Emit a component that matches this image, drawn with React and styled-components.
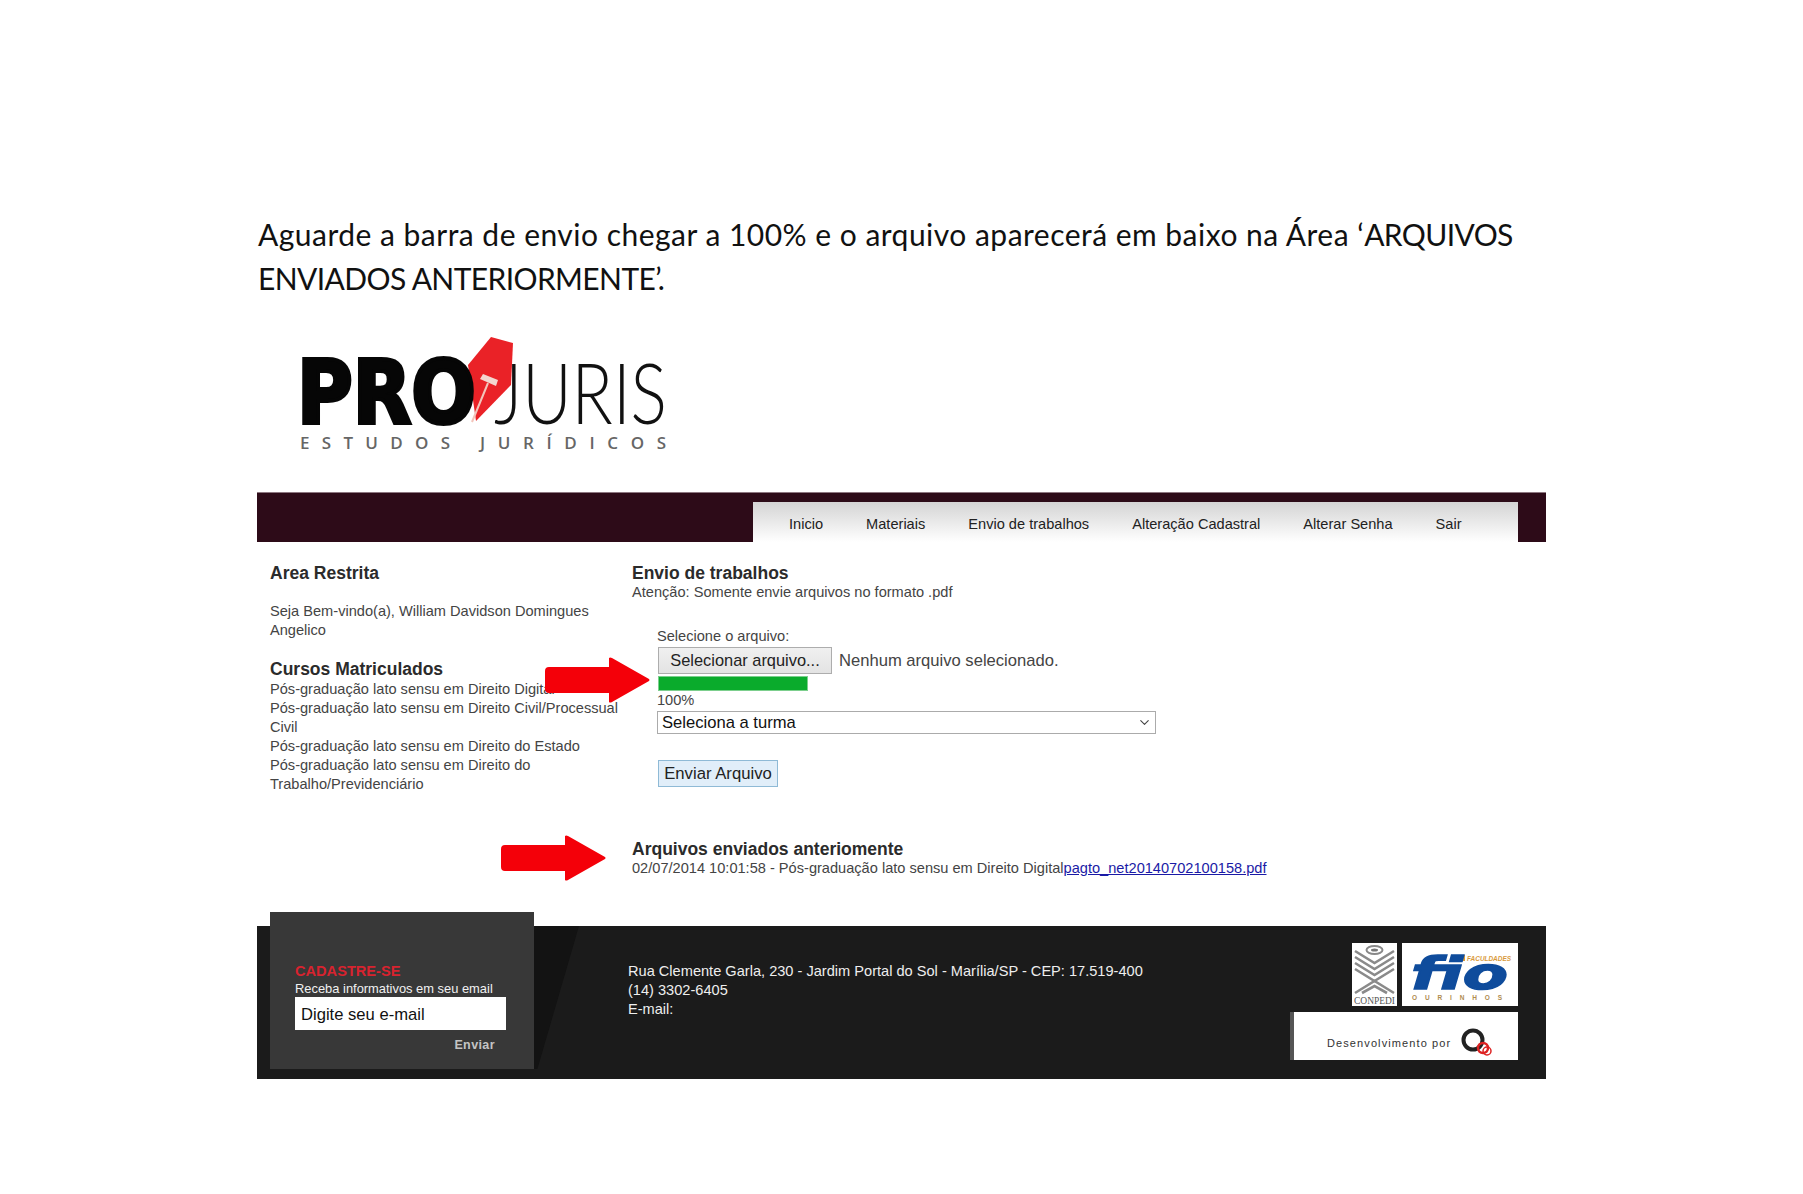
import React from "react";
import styled, { createGlobalStyle } from "styled-components";
import { ChevronDown } from "lucide-react";

const GlobalStyle = createGlobalStyle`
  html, body {
    margin: 0;
    padding: 0;
    background: #fff;
  }
  body {
    font-family: "Liberation Sans", Arial, sans-serif;
    color: #333;
  }
`;

const Page = styled.div`
  width: 1803px;
  height: 1194px;
  padding: 212px 0 0 257px;
  box-sizing: border-box;
  overflow: hidden;
`;

const Intro = styled.p`
  margin: 0 0 0 1px;
  font-family: "Lato", "Open Sans", sans-serif;
  font-size: 30px;
  line-height: 44px;
  letter-spacing: 0.48px;
  color: #111;
  white-space: nowrap;
`;

const Caps = styled.span`
  letter-spacing: -0.6px;
`;

const LogoWrap = styled.div`
  margin-top: 29px;
  height: 163px;
  padding-left: 33px;
  svg {
    display: block;
  }
`;

const Sheet = styled.div`
  width: 1289px;
`;

const Band = styled.div`
  height: 50px;
  background: #2d0b18;
  border-top: 1px solid #8d7780;
  box-sizing: border-box;
  display: flex;
  justify-content: flex-end;
  align-items: flex-end;
  padding-right: 28px;
`;

const Nav = styled.nav`
  width: 765px;
  height: 40px;
  box-sizing: border-box;
  padding: 13px 0 0 36px;
  background: linear-gradient(#d4d4d4, #ffffff);
  display: flex;
  gap: 43px;
  font-size: 14.6px;
  line-height: 18px;
  color: #222;
`;

const Content = styled.div`
  position: relative;
  display: flex;
  padding-top: 21px;
`;

const Side = styled.aside`
  width: 362px;
  margin-left: 13px;
  flex: none;
`;

const Main = styled.main`
  flex: 1;
`;

const Title = styled.h2`
  margin: ${(p) => p.$top || 0}px 0 0;
  font-size: 17.5px;
  line-height: 20px;
  font-weight: 700;
  color: #2b2b2b;
`;

const Text = styled.p`
  margin: ${(p) => p.$top || 0}px 0 0;
  font-size: 14.6px;
  line-height: ${(p) => p.$line || 19}px;
  color: #444;
`;

const CourseList = styled.div`
  margin-top: 1px;
  font-size: 14.6px;
  line-height: 19px;
  color: #444;
  div {
    width: 362px;
  }
`;

const UploadForm = styled.form`
  margin: 26px 0 0 25px;
  width: 499px;
`;

const FileRow = styled.div`
  margin-top: 2px;
  display: flex;
  align-items: center;
  gap: 7px;
  font-size: 16.6px;
  color: #444;
`;

const FileButton = styled.button`
  margin-left: 1px;
  width: 174px;
  height: 27px;
  padding: 0;
  border: 1px solid #adadad;
  background: linear-gradient(#f0f0f0, #e3e3e3);
  font-family: inherit;
  font-size: 16.4px;
  color: #222;
`;

const Progress = styled.div`
  margin: 2px 0 0 1px;
  width: 150px;
  height: 15px;
  box-sizing: border-box;
  border: 1px solid #7ccf8d;
  background: #0aab2c;
`;

const Percent = styled.div`
  font-size: 14.6px;
  line-height: 18px;
  color: #444;
`;

const SelectWrap = styled.div`
  position: relative;
  margin-top: 2px;
  svg {
    position: absolute;
    right: 4px;
    top: 4px;
    color: #444;
    pointer-events: none;
  }
`;

const TurmaSelect = styled.select`
  display: block;
  width: 499px;
  height: 23px;
  padding: 0 0 0 4px;
  border: 1px solid #ababab;
  border-radius: 0;
  appearance: none;
  background: #fff;
  font-family: inherit;
  font-size: 16.6px;
  color: #111;
`;

const SendButton = styled.button`
  display: block;
  margin: 26px 0 0 1px;
  width: 120px;
  height: 27px;
  padding: 0;
  border: 1px solid #8fbad6;
  background: #e1eef9;
  font-family: inherit;
  font-size: 16.7px;
  color: #222;
`;

const FileLink = styled.a`
  color: #1a1aa6;
  text-decoration: underline;
`;

const ArrowMark = styled.svg`
  position: absolute;
  left: ${(p) => p.$left}px;
  top: ${(p) => p.$top}px;
`;

const Footer = styled.footer`
  position: relative;
  margin-top: 49px;
  height: 153px;
  display: flex;
  align-items: flex-start;
  background: #1b1b1b;
  &::before {
    content: "";
    position: absolute;
    left: 270px;
    top: 0;
    width: 52px;
    height: 143px;
    background: #131313;
    clip-path: polygon(0 0, 100% 0, 20% 100%, 0 100%);
  }
`;

const Signup = styled.div`
  position: relative;
  margin: -14px 0 0 13px;
  width: 264px;
  height: 157px;
  box-sizing: border-box;
  padding: 50px 0 0 25px;
  background: #383838;
  flex: none;
`;

const SignupTitle = styled.div`
  font-size: 14.6px;
  line-height: 18px;
  font-weight: 700;
  color: #d8232f;
`;

const SignupNote = styled.div`
  font-size: 12.9px;
  line-height: 17px;
  color: #f0f0f0;
`;

const EmailInput = styled.input`
  display: block;
  width: 211px;
  height: 33px;
  box-sizing: border-box;
  padding: 2px 6px 0;
  border: 0;
  border-radius: 0;
  background: #fff;
  font-family: inherit;
  font-size: 16.6px;
  &::placeholder {
    color: #111;
    opacity: 1;
  }
`;

const SignupSend = styled.div`
  width: 200px;
  margin-top: 6px;
  text-align: right;
  font-size: 12.5px;
  line-height: 18px;
  font-weight: 700;
  letter-spacing: 0.4px;
  color: #c4c4c4;
`;

const Address = styled.div`
  position: relative;
  margin-left: 94px;
  padding-top: 36px;
  font-size: 14.6px;
  line-height: 19px;
  color: #eee;
`;

const Partners = styled.div`
  margin-left: auto;
  padding: 17px 28px 0 0;
  width: 228px;
  display: flex;
  flex-direction: column;
  align-items: flex-end;
  gap: 6px;
  svg {
    display: block;
  }
`;

const PartnerRow = styled.div`
  display: flex;
  gap: 5px;
`;

const DevBox = styled.div`
  width: 228px;
  height: 48px;
  box-sizing: border-box;
  padding: 14px 0 0 33px;
  display: flex;
  align-items: center;
  gap: 10px;
  background: #fff;
  border-left: 4px solid #555;
  font-size: 11px;
  letter-spacing: 1.1px;
  color: #333;
  white-space: nowrap;
`;

const Logo = () => (
  <svg width="390" height="130" viewBox="0 0 390 130">
    <polygon points="201,8 223,14 221,56 186,92 178,36" fill="#ea2227" />
    <text x="7" y="94" fontFamily="DejaVu Sans" fontWeight="700" fontSize="88" textLength="179" lengthAdjust="spacingAndGlyphs" stroke="#060606" strokeWidth="4" fill="#060606">PRO</text>
    <polygon points="190,50 193,45 208,51 206,57" fill="#f3d6cf" />
    <polyline points="198,54 182,93" stroke="#f3c4ba" strokeWidth="2" fill="none" />
    <text x="204" y="95" fontFamily="Lato" fontWeight="300" fontSize="85" textLength="173" lengthAdjust="spacingAndGlyphs" fill="#111">JURIS</text>
    <text x="10" y="120" fontFamily="Open Sans" fontWeight="600" fontSize="17" textLength="150" fill="#666">ESTUDOS</text>
    <text x="190" y="120" fontFamily="Open Sans" fontWeight="600" fontSize="17" textLength="186" fill="#666">JURÍDICOS</text>
  </svg>
);

const Arrow = ({ left, top }) => (
  <ArrowMark $left={left} $top={top} width="105" height="46" viewBox="0 0 105 46">
    <path d="M4 10 H64 V1 Q65 0 67 1 L104 22 Q105 23 104 24 L67 45 Q65 46 64 45 V36 H4 Q0 36 0 32 V14 Q0 10 4 10 Z" fill="#f40009" />
  </ArrowMark>
);

const Conpedi = () => (
  <svg width="45" height="63" viewBox="0 0 45 63">
    <rect width="45" height="63" fill="#fff" />
    <ellipse cx="22.5" cy="7" rx="8" ry="4" fill="none" stroke="#888" strokeWidth="2" />
    <ellipse cx="22.5" cy="7" rx="3.5" ry="1.5" fill="#777" />
    <g fill="none" stroke="#8a8a8a" strokeWidth="2.6">
      <path d="M3 8 L22.5 20 L42 8" />
      <path d="M3 14 L22.5 26 L42 14" />
      <path d="M3 20 L22.5 32 L42 20" />
      <path d="M3 26 L22.5 38 L42 26" />
      <path d="M3 50 L22.5 38 L42 50" />
      <path d="M10 50 L22.5 43 L35 50" />
    </g>
    <text x="22.5" y="61" textAnchor="middle" fontFamily="Liberation Serif" fontSize="9.5" textLength="41" lengthAdjust="spacingAndGlyphs" fill="#555">CONPEDI</text>
  </svg>
);

const Fio = () => (
  <svg width="116" height="63" viewBox="0 0 116 63">
    <rect width="116" height="63" fill="#fff" />
    <rect x="51" y="12" width="12" height="6" fill="#d99a3c" />
    <text x="9" y="46" fontFamily="DejaVu Sans" fontWeight="700" fontStyle="italic" fontSize="44" textLength="97" lengthAdjust="spacingAndGlyphs" stroke="#0f4c9c" strokeWidth="1.5" fill="#0f4c9c">fio</text>
    <text x="65" y="18" fontFamily="Liberation Sans" fontWeight="700" fontStyle="italic" fontSize="8" textLength="44" lengthAdjust="spacingAndGlyphs" fill="#d99a3c">FACULDADES</text>
    <text x="10" y="57" fontFamily="Liberation Sans" fontWeight="700" fontSize="6.5" textLength="90" fill="#b08c50">OURINHOS</text>
  </svg>
);

const Rings = () => (
  <svg width="32" height="30" viewBox="0 0 32 30">
    <circle cx="12" cy="12" r="9.5" fill="none" stroke="#222" strokeWidth="4" />
    <circle cx="22" cy="20" r="5" fill="none" stroke="#d22" strokeWidth="2.5" />
    <circle cx="26" cy="23" r="4" fill="none" stroke="#d22" strokeWidth="1.5" />
  </svg>
);

const App = () => {
  return (
    <>
      <GlobalStyle />
      <Page>
        <Intro>
          Aguarde a barra de envio chegar a 100% e o arquivo aparecerá em baixo na Área ‘<Caps>ARQUIVOS</Caps>
          <br />
          <Caps>ENVIADOS ANTERIORMENTE’.</Caps>
        </Intro>
        <LogoWrap>
          <Logo />
        </LogoWrap>
        <Sheet>
          <Band>
            <Nav>
              <span>Inicio</span>
              <span>Materiais</span>
              <span>Envio de trabalhos</span>
              <span>Alteração Cadastral</span>
              <span>Alterar Senha</span>
              <span>Sair</span>
            </Nav>
          </Band>
          <Content>
            <Side>
              <Title>Area Restrita</Title>
              <Text $top={19}>
                Seja Bem-vindo(a), William Davidson Domingues
                <br />
                Angelico
              </Text>
              <Title $top={19}>Cursos Matriculados</Title>
              <CourseList>
                <div>Pós-graduação lato sensu em Direito Digital</div>
                <div>Pós-graduação lato sensu em Direito Civil/Processual Civil</div>
                <div>Pós-graduação lato sensu em Direito do Estado</div>
                <div>Pós-graduação lato sensu em Direito do Trabalho/Previdenciário</div>
              </CourseList>
            </Side>
            <Main>
              <Title>Envio de trabalhos</Title>
              <Text $line={18}>Atenção: Somente envie arquivos no formato .pdf</Text>
              <UploadForm>
                <Text $line={18}>Selecione o arquivo:</Text>
                <FileRow>
                  <FileButton type="button">Selecionar arquivo...</FileButton>
                  <span>Nenhum arquivo selecionado.</span>
                </FileRow>
                <Progress />
                <Percent>100%</Percent>
                <SelectWrap>
                  <TurmaSelect defaultValue="">
                    <option value="">Seleciona a turma</option>
                  </TurmaSelect>
                  <ChevronDown size={15} strokeWidth={1.75} />
                </SelectWrap>
                <SendButton type="button">Enviar Arquivo</SendButton>
              </UploadForm>
              <Title $top={52}>Arquivos enviados anteriomente</Title>
              <Text $line={18}>
                02/07/2014 10:01:58 - Pós-graduação lato sensu em Direito Digital
                <FileLink href="#">pagto_net20140702100158.pdf</FileLink>
              </Text>
            </Main>
            <Arrow left={288} top={115} />
            <Arrow left={244} top={293} />
          </Content>
          <Footer>
            <Signup>
              <SignupTitle>CADASTRE-SE</SignupTitle>
              <SignupNote>Receba informativos em seu email</SignupNote>
              <EmailInput placeholder="Digite seu e-mail" />
              <SignupSend>Enviar</SignupSend>
            </Signup>
            <Address>
              Rua Clemente Garla, 230 - Jardim Portal do Sol - Marília/SP - CEP: 17.519-400
              <br />
              (14) 3302-6405
              <br />
              E-mail:
            </Address>
            <Partners>
              <PartnerRow>
                <Conpedi />
                <Fio />
              </PartnerRow>
              <DevBox>
                <span>Desenvolvimento por</span>
                <Rings />
              </DevBox>
            </Partners>
          </Footer>
        </Sheet>
      </Page>
    </>
  );
};

export default App;
